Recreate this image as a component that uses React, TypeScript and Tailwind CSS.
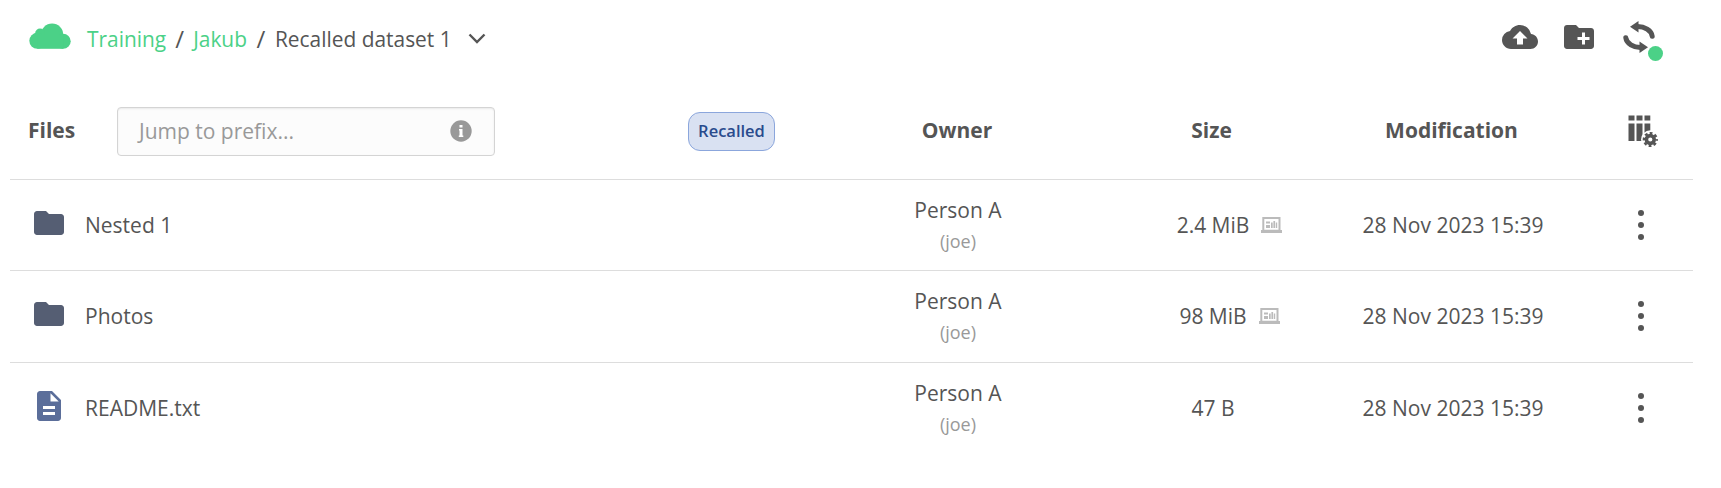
import type { ReactNode } from "react";
import { MdCloudUpload, MdCreateNewFolder, MdDescription, MdFolder } from "react-icons/md";

type FileRow = {
  name: string;
  type: "dir" | "file";
  size: string;
  hasStats?: boolean;
};

const rows: FileRow[] = [
  { name: "Nested 1", type: "dir", size: "2.4 MiB", hasStats: true },
  { name: "Photos", type: "dir", size: "98 MiB", hasStats: true },
  { name: "README.txt", type: "file", size: "47 B" },
];

const CloudIcon = () => (
  <svg width="42" height="26" viewBox="0 0 42 26" fill="#4bd187">
    <circle cx="23.1" cy="11.5" r="11.1" />
    <circle cx="11" cy="10.4" r="4.9" />
    <circle cx="8.3" cy="17.8" r="8" />
    <circle cx="34.2" cy="18.3" r="7.5" />
    <path d="M8.300 12h26v13.800h-26z" />
  </svg>
);

const RefreshArrow = () => (
  <>
    <path d="M7 5.700L15.500 0V11.400Z" fill="#555" />
    <path d="M14 5.600C21.500 5.400 28.500 9.500 29.200 15.300" fill="none" stroke="#555" strokeWidth="5" strokeLinecap="round" />
  </>
);

const RefreshIcon = () => (
  <svg width="32" height="32" viewBox="0 0 32 32">
    <RefreshArrow />
    <g transform="rotate(180 16 16)">
      <RefreshArrow />
    </g>
  </svg>
);

const ColumnsIcon = () => (
  <svg width="30" height="33" viewBox="0 0 30 33">
    <path d="M0.500 0.500h6v5h-6zM8.500 0.500h6v5h-6zM16.500 0.500h5.800v5h-5.800zM0.500 8.500h6V26h-6zM8.500 8.500h6V26h-6zM16.500 8.500h5.800V26h-5.800z" fill="#555" />
    <circle cx="22.300" cy="24.500" r="9.300" fill="#fff" />
    <circle cx="22.300" cy="24.500" r="3.900" fill="none" stroke="#555" strokeWidth="3.600" />
    <circle cx="22.300" cy="24.500" r="6.400" fill="none" stroke="#555" strokeWidth="2.400" strokeDasharray="2.800 2.227" strokeDashoffset="1.400" />
  </svg>
);

const StatsIcon = () => (
  <svg width="21" height="16" viewBox="0 0 21 16" fill="#bbb">
    <path fillRule="evenodd" d="M1.300 0h18.200v13H21v3H0v-3h1.300zM3.300 2v10.800h14.200V2z" />
    <path d="M5 4.500h4v2H5zM5 8h4v3H5zM10 5.500h1.700V11H10zM12.400 4h1.700v7h-1.700zM14.800 5.500h1.400V11h-1.400z" />
  </svg>
);

const Row = ({ children }: { children: ReactNode }) => (
  <div className="grid h-[91.5px] grid-cols-[864px_168px_342px_138px_171px] items-center border-t border-[#ddd]">
    {children}
  </div>
);

export default function App() {
  return (
    <div className="h-[488px] w-[1721px] bg-white pl-2.5 font-['Open_Sans',sans-serif] text-[21px] leading-[32px] text-[#555]">
      <header className="flex h-[78px] w-[1683px] items-center">
        <div className="mb-1.5 ml-[19px]">
          <CloudIcon />
        </div>
        <nav className="ml-4 flex items-center whitespace-pre text-[20.9px]">
          <a className="text-[#4bd187]">Training</a>
          <span className="w-[27px] text-center text-[24px]">/</span>
          <a className="text-[#4bd187]">Jakub</a>
          <span className="w-[28px] text-center text-[24px]">/</span>
          <span>Recalled dataset 1</span>
          <svg className="ml-4" width="18" height="12" viewBox="0 0 18 12" fill="none" stroke="#555" strokeWidth="2.400">
            <path d="M1.500 1.500L9 9L16.500 1.500" />
          </svg>
        </nav>
        <div className="mb-[5px] ml-auto flex items-center pr-[38px]">
          <MdCloudUpload className="size-9" color="#555" />
          <MdCreateNewFolder className="ml-[23px] size-9" color="#555" />
          <div className="relative ml-[26px]">
            <RefreshIcon />
            <span className="absolute top-[25px] left-[25px] size-[15px] rounded-full bg-[#4bd187]" />
          </div>
        </div>
      </header>

      <div className="flex h-[100.6px] w-[1683px] items-center font-bold">
        <span className="mt-[3.5px] ml-[18px] w-[89px]">Files</span>
        <div className="mt-1.5 flex h-[49px] w-[378px] items-center justify-between rounded border border-[#d4d4d4] bg-[#fcfcfc] pr-[22px] pl-[21px] font-normal text-[#999] shadow-[inset_0_1px_2px_rgba(0,0,0,0.08)]">
          <span>Jump to prefix...</span>
          <svg width="22" height="22" viewBox="0 0 22 22">
            <circle cx="11" cy="11" r="10.700" fill="#999" />
            <path d="M9.500 5h3v2.600h-3zM9 9h3.500v6.500h.8V17H8.800v-1.500h.7v-5H9z" fill="#fff" />
          </svg>
        </div>
        <span className="mt-1.5 ml-[193px] flex h-[39px] w-[87px] items-center justify-center rounded-xl border border-[#8ba6dc] bg-[#d9e1f2] text-[16.5px] font-semibold text-[#2a4b8d]">
          Recalled
        </span>
        <span className="mt-[3.5px] ml-[98px] w-[168px] text-center">Owner</span>
        <span className="mt-[3.5px] w-[341px] text-center">Size</span>
        <span className="mt-[3.5px] w-[139px] text-center">Modification</span>
        <div className="mt-1.5 ml-auto pr-[35px]">
          <ColumnsIcon />
        </div>
      </div>

      <main className="w-[1683px]">
        {rows.map((row) => (
          <Row key={row.name}>
            <div className="flex items-center">
              {row.type === "dir" ? (
                <MdFolder className="mb-1 ml-[20.5px] size-9" color="#555e73" />
              ) : (
                <MdDescription className="mb-[3px] ml-[20.5px] size-9" color="#5b6e9a" />
              )}
              <span className="ml-[18.5px]">{row.name}</span>
            </div>
            <div className="pt-px text-center">
              <div>Person A</div>
              <div className="text-[18px] leading-[31px] text-[#999]">(joe)</div>
            </div>
            <div className="text-center">
              <span className="relative">
                {row.size}
                {row.hasStats && (
                  <span className="absolute top-1.5 left-full ml-3">
                    <StatsIcon />
                  </span>
                )}
              </span>
            </div>
            <div className="flex justify-center whitespace-nowrap">28 Nov 2023 15:39</div>
            <div className="flex flex-col items-end gap-1.5 pr-[49px]">
              <i className="size-1.5 rounded-full bg-[#555]" />
              <i className="size-1.5 rounded-full bg-[#555]" />
              <i className="size-1.5 rounded-full bg-[#555]" />
            </div>
          </Row>
        ))}
      </main>
    </div>
  );
}
